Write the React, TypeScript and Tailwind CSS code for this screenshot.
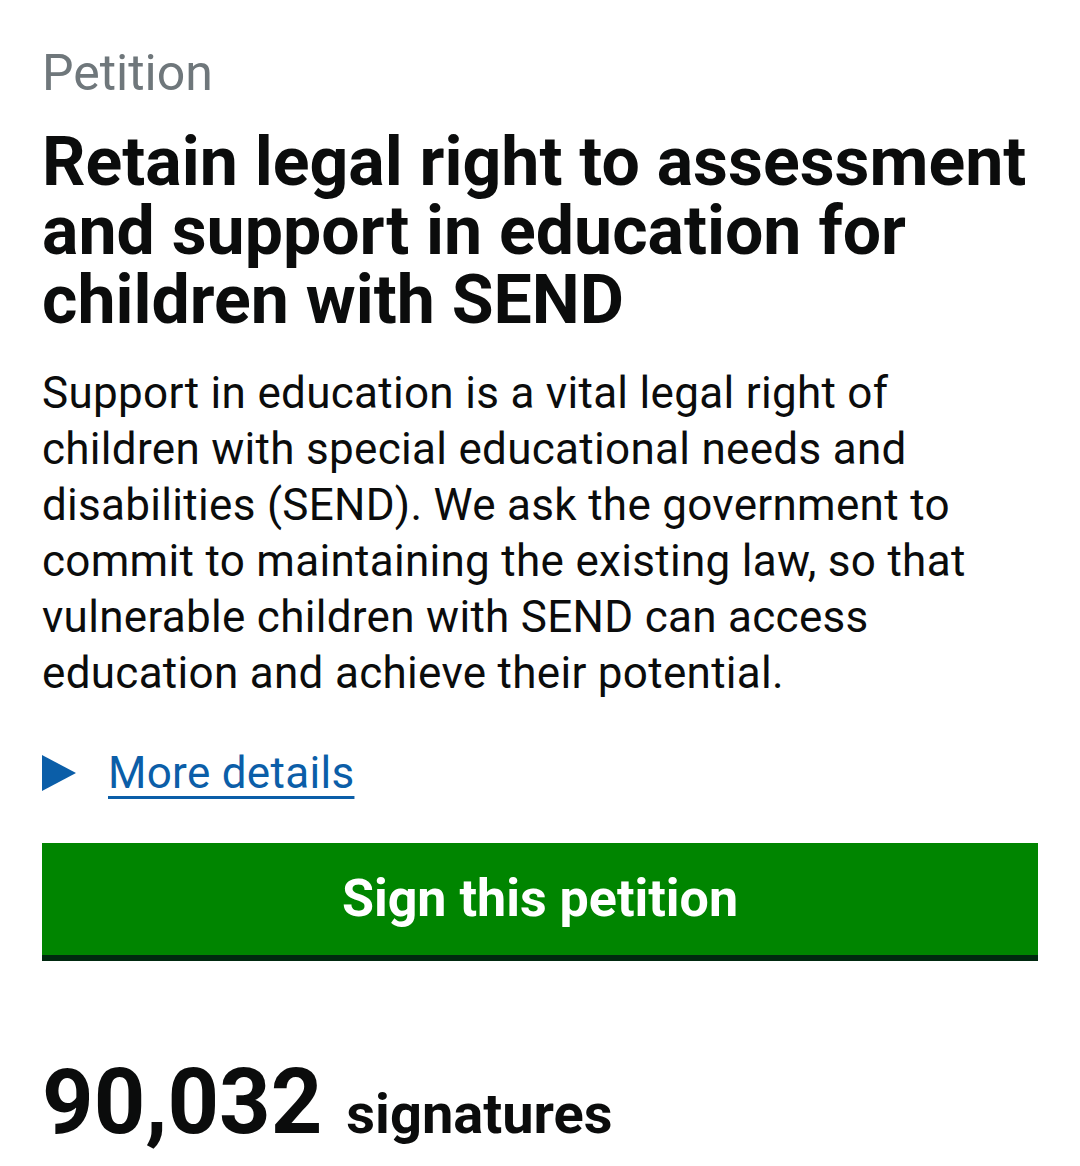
export default function App() {
  return (
    <div className="min-h-screen bg-white px-[42px] pt-[43px] font-['Roboto',sans-serif] text-[#0b0c0c]">
      <p className="text-[50px] leading-[60px] text-[#6f777b]">Petition</p>
      <h1 className="mt-[25px] text-[68px] font-bold leading-[69px]">
        Retain legal right to assessment and support in education for children with SEND
      </h1>
      <p className="mt-[30px] pr-[40px] text-[44px] leading-[56px] tracking-[0.3px]">
        Support in education is a vital legal right of children with special educational needs and
        disabilities (SEND). We ask the government to commit to maintaining the existing law, so that
        vulnerable children with SEND can access education and achieve their potential.
      </p>
      <div className="mt-[44px] flex items-center">
        <svg width="34" height="36" viewBox="0 0 34 36" className="mr-[32px] shrink-0">
          <polygon points="0,0 34,18 0,36" fill="#0b5ea8" />
        </svg>
        <a href="#" className="text-[44px] leading-[56px] tracking-[0.3px] text-[#0b5ea8] underline decoration-[3px] underline-offset-[8px]">
          More details
        </a>
      </div>
      <button className="mt-[42px] flex h-[118px] w-full items-center justify-center bg-[#008500] pb-[6px] text-[52px] font-bold text-white shadow-[inset_0_-6px_0_#00290f]">
        Sign this petition
      </button>
      <div className="mt-[92px] flex items-baseline">
        <span className="text-[90px] font-bold leading-[100px]">90,032</span>
        <span className="ml-[24px] text-[56px] font-bold">signatures</span>
      </div>
    </div>
  );
}
